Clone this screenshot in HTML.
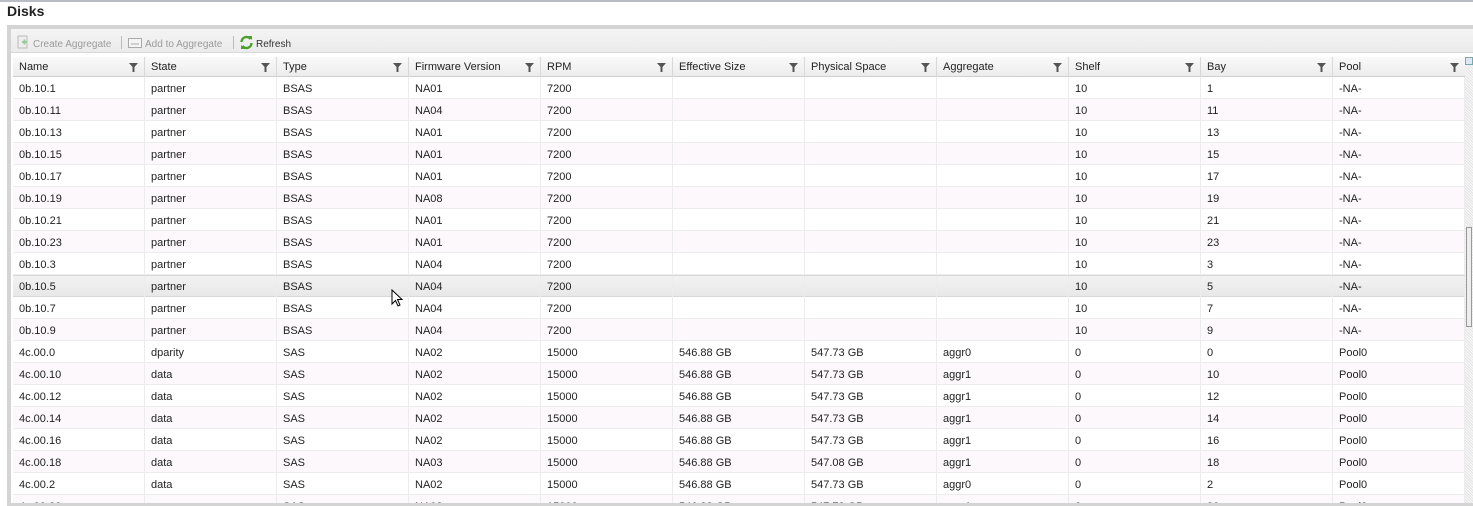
<!DOCTYPE html>
<html><head><meta charset="utf-8"><style>
*{margin:0;padding:0;box-sizing:border-box}
body{width:1473px;height:506px;overflow:hidden;background:#fff;font-family:"Liberation Sans",Arial,sans-serif;font-size:11px;color:#222;position:relative}
#topline{position:absolute;left:0;top:0;width:1473px;height:2px;background:#b8bcc4}
#title{position:absolute;left:7px;top:3px;font-size:14px;font-weight:bold;color:#222}
#panel{position:absolute;left:7px;top:25px;width:1466px;height:481px;background:#d4d4d4}
#inner{position:absolute;left:4px;top:4px;right:0;bottom:3px;background:#fff;overflow:hidden}
#tb{position:absolute;left:0;top:0;width:100%;height:24px;background:linear-gradient(#f4f4f4,#ebebeb);border-bottom:1px solid #d8d8d8}
.tbi{position:absolute;top:10px;font-size:10px;color:#9a9a9a}
.sep{position:absolute;top:7px;width:1px;height:13px;background:#bbb}
#hdr{position:absolute;left:2px;top:28px;height:20px;width:1452px;background:linear-gradient(#fafafa,#ececec);border-bottom:1px solid #d0d0d0}
.h{position:absolute;top:0;width:132px;height:20px;border-right:1px solid #d8d8d8;padding:4px 0 0 6px;font-size:11px;color:#222}
.h svg{position:absolute;right:6px;top:6px}
.row{position:absolute;left:2px;width:1452px;height:22px;border-bottom:1px solid #ececec;background:#fff}
.row.o{background:#fcf8fb}
.row.hv{background:linear-gradient(#f2f2f2,#e8e8e8);border-top:1px solid #d8d8d8;border-bottom:1px solid #d8d8d8}
.row>div{position:absolute;top:0;width:132px;height:22px;border-right:1px solid #ececec;padding:6px 0 0 6px;white-space:nowrap}
.row.hv>div{padding-top:5px}
.row>div:nth-child(1),.h:nth-child(1){left:0}
.row>div:nth-child(2),.h:nth-child(2){left:132px}
.row>div:nth-child(3),.h:nth-child(3){left:264px}
.row>div:nth-child(4),.h:nth-child(4){left:396px}
.row>div:nth-child(5),.h:nth-child(5){left:528px}
.row>div:nth-child(6),.h:nth-child(6){left:660px}
.row>div:nth-child(7),.h:nth-child(7){left:792px}
.row>div:nth-child(8),.h:nth-child(8){left:924px}
.row>div:nth-child(9),.h:nth-child(9){left:1056px}
.row>div:nth-child(10),.h:nth-child(10){left:1188px}
.row>div:nth-child(11),.h:nth-child(11){left:1320px}
#sb{position:absolute;left:1454px;top:28px;width:8px;height:460px;background:repeating-linear-gradient(45deg,#e4e4e4 0 1px,#f8f8f8 1px 2px)}
</style></head><body>
<div id="topline"></div>
<div id="title">Disks</div>
<div id="panel"><div id="inner">
<div id="tb">
<svg style="position:absolute;left:6px;top:6px" width="12" height="14"><rect x="1" y="1" width="9" height="12" fill="#eee" stroke="#bbb"/><path d="M5 7h5M7.5 4.5v5" stroke="#9c9" stroke-width="2"/></svg>
<span class="tbi" style="left:22px">Create Aggregate</span>
<div class="sep" style="left:110px"></div>
<svg style="position:absolute;left:117px;top:9px" width="14" height="10"><rect x="0.5" y="0.5" width="13" height="9" fill="#f4f4f4" stroke="#aaa"/><path d="M3 6h8" stroke="#aaa"/></svg>
<span class="tbi" style="left:134px">Add to Aggregate</span>
<div class="sep" style="left:222px"></div>
<svg style="position:absolute;left:228px;top:6px" width="15" height="15" viewBox="0 0 15 15"><path d="M2.5 7a5 5 0 0 1 9-3" fill="none" stroke="#4aa02a" stroke-width="2.4"/><path d="M12.5 8a5 5 0 0 1-9 3" fill="none" stroke="#4aa02a" stroke-width="2.4"/><path d="M9 1l4 0l0 4z" fill="#4aa02a"/><path d="M6 14l-4 0l0-4z" fill="#4aa02a"/></svg>
<span class="tbi" style="left:245px;color:#333">Refresh</span>
</div>
<div id="hdr">
<div class="h">Name<svg width="9" height="9"><path d="M0 0h9L5.5 4v5h-2V4z" fill="#555"/></svg></div>
<div class="h">State<svg width="9" height="9"><path d="M0 0h9L5.5 4v5h-2V4z" fill="#555"/></svg></div>
<div class="h">Type<svg width="9" height="9"><path d="M0 0h9L5.5 4v5h-2V4z" fill="#555"/></svg></div>
<div class="h">Firmware Version<svg width="9" height="9"><path d="M0 0h9L5.5 4v5h-2V4z" fill="#555"/></svg></div>
<div class="h">RPM<svg width="9" height="9"><path d="M0 0h9L5.5 4v5h-2V4z" fill="#555"/></svg></div>
<div class="h">Effective Size<svg width="9" height="9"><path d="M0 0h9L5.5 4v5h-2V4z" fill="#555"/></svg></div>
<div class="h">Physical Space<svg width="9" height="9"><path d="M0 0h9L5.5 4v5h-2V4z" fill="#555"/></svg></div>
<div class="h">Aggregate<svg width="9" height="9"><path d="M0 0h9L5.5 4v5h-2V4z" fill="#555"/></svg></div>
<div class="h">Shelf<svg width="9" height="9"><path d="M0 0h9L5.5 4v5h-2V4z" fill="#555"/></svg></div>
<div class="h">Bay<svg width="9" height="9"><path d="M0 0h9L5.5 4v5h-2V4z" fill="#555"/></svg></div>
<div class="h" style="border-right:none">Pool<svg width="9" height="9"><path d="M0 0h9L5.5 4v5h-2V4z" fill="#555"/></svg></div>
</div>
<div class="row" style="top:48px"><div>0b.10.1</div><div>partner</div><div>BSAS</div><div>NA01</div><div>7200</div><div></div><div></div><div></div><div>10</div><div>1</div><div>-NA-</div></div>
<div class="row o" style="top:70px"><div>0b.10.11</div><div>partner</div><div>BSAS</div><div>NA04</div><div>7200</div><div></div><div></div><div></div><div>10</div><div>11</div><div>-NA-</div></div>
<div class="row" style="top:92px"><div>0b.10.13</div><div>partner</div><div>BSAS</div><div>NA01</div><div>7200</div><div></div><div></div><div></div><div>10</div><div>13</div><div>-NA-</div></div>
<div class="row o" style="top:114px"><div>0b.10.15</div><div>partner</div><div>BSAS</div><div>NA01</div><div>7200</div><div></div><div></div><div></div><div>10</div><div>15</div><div>-NA-</div></div>
<div class="row" style="top:136px"><div>0b.10.17</div><div>partner</div><div>BSAS</div><div>NA01</div><div>7200</div><div></div><div></div><div></div><div>10</div><div>17</div><div>-NA-</div></div>
<div class="row o" style="top:158px"><div>0b.10.19</div><div>partner</div><div>BSAS</div><div>NA08</div><div>7200</div><div></div><div></div><div></div><div>10</div><div>19</div><div>-NA-</div></div>
<div class="row" style="top:180px"><div>0b.10.21</div><div>partner</div><div>BSAS</div><div>NA01</div><div>7200</div><div></div><div></div><div></div><div>10</div><div>21</div><div>-NA-</div></div>
<div class="row o" style="top:202px"><div>0b.10.23</div><div>partner</div><div>BSAS</div><div>NA01</div><div>7200</div><div></div><div></div><div></div><div>10</div><div>23</div><div>-NA-</div></div>
<div class="row" style="top:224px"><div>0b.10.3</div><div>partner</div><div>BSAS</div><div>NA04</div><div>7200</div><div></div><div></div><div></div><div>10</div><div>3</div><div>-NA-</div></div>
<div class="row hv" style="top:246px"><div>0b.10.5</div><div>partner</div><div>BSAS</div><div>NA04</div><div>7200</div><div></div><div></div><div></div><div>10</div><div>5</div><div>-NA-</div></div>
<div class="row" style="top:268px"><div>0b.10.7</div><div>partner</div><div>BSAS</div><div>NA04</div><div>7200</div><div></div><div></div><div></div><div>10</div><div>7</div><div>-NA-</div></div>
<div class="row o" style="top:290px"><div>0b.10.9</div><div>partner</div><div>BSAS</div><div>NA04</div><div>7200</div><div></div><div></div><div></div><div>10</div><div>9</div><div>-NA-</div></div>
<div class="row" style="top:312px"><div>4c.00.0</div><div>dparity</div><div>SAS</div><div>NA02</div><div>15000</div><div>546.88 GB</div><div>547.73 GB</div><div>aggr0</div><div>0</div><div>0</div><div>Pool0</div></div>
<div class="row o" style="top:334px"><div>4c.00.10</div><div>data</div><div>SAS</div><div>NA02</div><div>15000</div><div>546.88 GB</div><div>547.73 GB</div><div>aggr1</div><div>0</div><div>10</div><div>Pool0</div></div>
<div class="row" style="top:356px"><div>4c.00.12</div><div>data</div><div>SAS</div><div>NA02</div><div>15000</div><div>546.88 GB</div><div>547.73 GB</div><div>aggr1</div><div>0</div><div>12</div><div>Pool0</div></div>
<div class="row o" style="top:378px"><div>4c.00.14</div><div>data</div><div>SAS</div><div>NA02</div><div>15000</div><div>546.88 GB</div><div>547.73 GB</div><div>aggr1</div><div>0</div><div>14</div><div>Pool0</div></div>
<div class="row" style="top:400px"><div>4c.00.16</div><div>data</div><div>SAS</div><div>NA02</div><div>15000</div><div>546.88 GB</div><div>547.73 GB</div><div>aggr1</div><div>0</div><div>16</div><div>Pool0</div></div>
<div class="row o" style="top:422px"><div>4c.00.18</div><div>data</div><div>SAS</div><div>NA03</div><div>15000</div><div>546.88 GB</div><div>547.08 GB</div><div>aggr1</div><div>0</div><div>18</div><div>Pool0</div></div>
<div class="row" style="top:444px"><div>4c.00.2</div><div>data</div><div>SAS</div><div>NA02</div><div>15000</div><div>546.88 GB</div><div>547.73 GB</div><div>aggr0</div><div>0</div><div>2</div><div>Pool0</div></div>
<div class="row o" style="top:466px"><div>4c.00.20</div><div>spare</div><div>SAS</div><div>NA02</div><div>15000</div><div>546.88 GB</div><div>547.73 GB</div><div>aggr1</div><div>0</div><div>20</div><div>Pool0</div></div>
<div id="sb"><div style="position:absolute;left:0;top:0;width:8px;height:8px;background:#dde8f4;border:1px solid #7aa"></div><div style="position:absolute;left:1px;top:170px;width:6px;height:100px;border:1px solid #999;background:#eee"></div></div>
<svg style="position:absolute;left:380px;top:260px" width="12" height="18" viewBox="0 0 12 18"><path d="M1 1v14l3.5-3.5 2.5 5.5 2-1-2.5-5.5H11z" fill="#fff" stroke="#000" stroke-width="1"/></svg>
</div></div>
</body></html>
